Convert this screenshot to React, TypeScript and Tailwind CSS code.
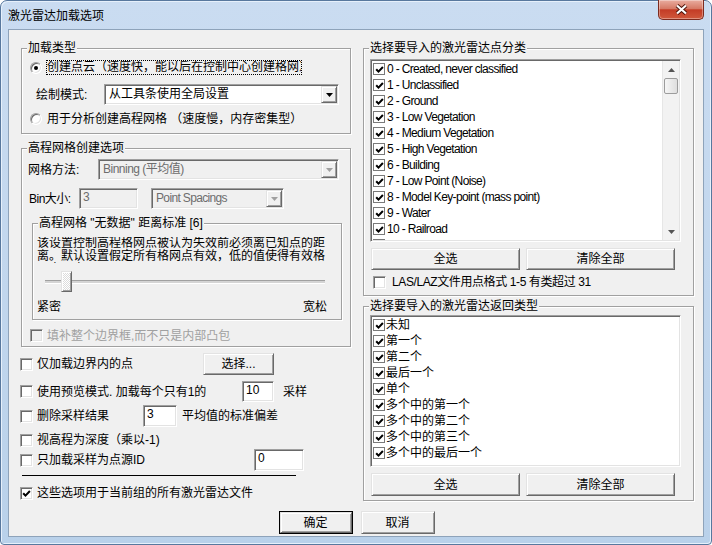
import React from "react";

const sunken =
  "border border-t-[#a0a0a0] border-l-[#a0a0a0] border-b-white border-r-white shadow-[inset_1px_1px_0_#696969,inset_-1px_-1px_0_#e3e3e3]";
const raised =
  "border border-t-[#e3e3e3] border-l-[#e3e3e3] border-b-[#696969] border-r-[#696969] shadow-[inset_1px_1px_0_#fff,inset_-1px_-1px_0_#a0a0a0] bg-[#f0f0f0]";
const etched = "border border-[#a0a0a0] shadow-[inset_1px_1px_0_#fff,1px_1px_0_#fff]";

function CheckMark() {
  return (
    <svg width="9" height="9" viewBox="0 0 9 9">
      <path d="M1.2 4.2 L3.5 6.6 L7.9 2" fill="none" stroke="#000" strokeWidth="2" />
    </svg>
  );
}

function Check({ checked = false, disabled = false }: { checked?: boolean; disabled?: boolean }) {
  return (
    <span
      className={`w-[13px] h-[13px] shrink-0 flex items-center justify-center ${sunken} ${
        disabled ? "bg-[#f0f0f0]" : "bg-white"
      }`}
    >
      {checked && <CheckMark />}
    </span>
  );
}

function ListCheck() {
  return (
    <span className="w-[12px] h-[12px] shrink-0 flex items-center justify-center border border-[#7a7a7a] bg-white">
      <CheckMark />
    </span>
  );
}

function Radio({ checked = false }: { checked?: boolean }) {
  return (
    <span className="w-[12px] h-[12px] shrink-0 rounded-full bg-white border border-t-[#a0a0a0] border-l-[#a0a0a0] border-b-white border-r-white shadow-[inset_1px_1px_0_#696969,inset_-1px_-1px_0_#e3e3e3] flex items-center justify-center">
      {checked && <span className="w-[4px] h-[4px] rounded-full bg-black" />}
    </span>
  );
}

function Combo({
  text,
  className = "",
  textClass = "",
  disabled = false,
}: {
  text: string;
  className?: string;
  textClass?: string;
  disabled?: boolean;
}) {
  return (
    <div
      className={`h-[21px] p-[1px] flex ${sunken} ${disabled ? "bg-[#f0f0f0] text-[#6d6d6d]" : "bg-white"} ${className}`}
    >
      <div className={`flex-1 pl-[3px] leading-[17px] whitespace-nowrap overflow-hidden ${textClass}`}>{text}</div>
      <div className={`w-[16px] h-[17px] flex items-center justify-center ${raised}`}>
        <svg width="7" height="4" viewBox="0 0 7 4">
          <path d="M0 0H7L3.5 4Z" fill={disabled ? "#a0a0a0" : "#000"} />
        </svg>
      </div>
    </div>
  );
}

function Edit({ value, className = "", disabled = false }: { value: string; className?: string; disabled?: boolean }) {
  return (
    <div
      className={`${sunken} ${disabled ? "bg-[#f0f0f0] text-[#6d6d6d]" : "bg-white"} pl-[3px] pt-[1px] leading-[15px] ${className}`}
    >
      {value}
    </div>
  );
}

function Btn({ children, className = "" }: { children: React.ReactNode; className?: string }) {
  return <div className={`flex items-center justify-center ${raised} ${className}`}>{children}</div>;
}

function Scrollbar() {
  return (
    <div className="w-[17px] h-full flex flex-col bg-[#f2f2f2] border-l border-[#e6e6e6]">
      <div className="h-[17px] flex items-center justify-center">
        <svg width="7" height="4" viewBox="0 0 7 4">
          <path d="M3.5 0L7 4H0Z" fill="#555" />
        </svg>
      </div>
      <div className="mx-[1px] h-[16px] rounded-[2px] border border-[#9c9c9c] bg-gradient-to-r from-[#f6f6f6] to-[#dedede]" />
      <div className="flex-1" />
      <div className="h-[17px] flex items-center justify-center">
        <svg width="7" height="4" viewBox="0 0 7 4">
          <path d="M0 0H7L3.5 4Z" fill="#555" />
        </svg>
      </div>
    </div>
  );
}

const classes = [
  "0 - Created, never classified",
  "1 - Unclassified",
  "2 - Ground",
  "3 - Low Vegetation",
  "4 - Medium Vegetation",
  "5 - High Vegetation",
  "6 - Building",
  "7 - Low Point (Noise)",
  "8 - Model Key-point (mass point)",
  "9 - Water",
  "10 - Railroad",
  "11 - Road Surface",
  "12 - Overlap",
];

const returns = ["未知", "第一个", "第二个", "最后一个", "单个", "多个中的第一个", "多个中的第二个", "多个中的第三个", "多个中的最后一个"];

export default function App() {
  return (
    <div className="w-[712px] h-[545px] font-['Liberation_Sans','Noto_Sans_CJK_SC',sans-serif] text-[12px] leading-[14px] text-black">
      <div className="w-full h-full flex flex-col border border-[#58789e] rounded-t-[7px] rounded-b-[4px] bg-gradient-to-b from-[#cadcf1] to-[#b9d1ea] shadow-[inset_1px_1px_0_#e6f0fb,inset_-1px_-1px_0_#e6f0fb]">
        {/* title bar */}
        <div className="h-[28px] flex items-start justify-between pl-[7px] pr-[7px]">
          <div className="mt-[8px] leading-[14px]">激光雷达加载选项</div>
          <div className="-mt-px w-[46px] h-[20px] rounded-b-[5px] border border-t-0 border-[#7d2b1f] bg-[linear-gradient(#e9ada0,#d67a66_45%,#c43c26_52%,#d0583c)] shadow-[inset_0_0_0_1px_rgba(255,255,255,0.35)] flex items-center justify-center">
            <svg width="13" height="11" viewBox="0 0 13 11">
              <path d="M2 1.5 L11 9.5 M11 1.5 L2 9.5" stroke="#4a1209" strokeWidth="4" />
              <path d="M2 1.5 L11 9.5 M11 1.5 L2 9.5" stroke="#fff" strokeWidth="2.2" />
            </svg>
          </div>
        </div>

        {/* client */}
        <div className="mx-[7px] mb-[7px] flex-1 border border-[#8ea3ba] bg-[#f0f0f0] flex flex-col pl-[12px] pr-[9px] pt-[11px]">
          <div className="flex gap-[12px]">
            {/* left column */}
            <div className="w-[330px] flex flex-col">
              <fieldset className={`${etched} pb-[7px]`}>
                <legend className="ml-[5px] px-[1px] bg-[#f0f0f0] leading-[14px]">加载类型</legend>
                <div className="pl-[8px]">
                  <div className="mt-[5px] h-[15px] flex items-center">
                    <Radio checked />
                    <span className="ml-[4px] w-[256px] h-[15px] border border-dotted border-black overflow-hidden whitespace-nowrap leading-[13px]">
                      创建点云（速度快，能以后在控制中心创建格网）
                    </span>
                  </div>
                  <div className="mt-[9px] h-[21px] flex items-center pl-[6px]">
                    <span className="w-[68px]">绘制模式:</span>
                    <Combo className="w-[235px]" text="从工具条使用全局设置" />
                  </div>
                  <div className="mt-[6px] h-[15px] flex items-center">
                    <Radio />
                    <span className="ml-[5px] whitespace-nowrap">用于分析创建高程网格 （速度慢，内存密集型）</span>
                  </div>
                </div>
              </fieldset>

              <fieldset className={`mt-[7px] ${etched} pb-[4px]`}>
                <legend className="ml-[5px] px-[1px] bg-[#f0f0f0] leading-[14px]">高程网格创建选项</legend>
                <div className="pl-[6px]">
                  <div className="mt-[4px] h-[21px] flex items-center">
                    <span className="w-[70px]">网格方法:</span>
                    <Combo disabled className="w-[241px]" textClass="tracking-[-0.5px]" text="Binning (平均值)" />
                  </div>
                  <div className="mt-[8px] h-[21px] flex items-center">
                    <span className="w-[51px] pl-[1px] tracking-[-0.5px]">Bin大小:</span>
                    <Edit disabled className="w-[59px] h-[21px]" value="3" />
                    <Combo
                      disabled
                      className="ml-[13px] w-[133px]"
                      textClass="tracking-[-0.65px]"
                      text="Point Spacings"
                    />
                  </div>
                  <fieldset className={`mt-[7px] ml-[4px] w-[310px] ${etched} pb-[5px]`}>
                    <legend className="ml-[5px] px-[1px] bg-[#f0f0f0] leading-[14px]">高程网格 "无数据" 距离标准 [6]</legend>
                    <div className="pl-[4px]">
                      <div className="mt-[7px] w-[292px] h-[26px] leading-[13px] overflow-hidden">
                        该设置控制高程格网点被认为失效前必须离已知点的距离。默认设置假定所有格网点有效，低的值使得有效格网点更少。
                      </div>
                      <div className="mt-[8px] h-[21px] relative pl-[8px] pt-[9px]">
                        <div className="w-[280px] h-[3px] border-t border-[#a0a0a0] bg-[#d4d4d4] shadow-[0_1px_0_#fff]" />
                        <div className="absolute left-[24px] top-0 w-[11px] h-[21px] border border-t-[#e3e3e3] border-l-[#e3e3e3] border-b-[#696969] border-r-[#696969] shadow-[inset_1px_1px_0_#fff,inset_-1px_-1px_0_#a0a0a0] bg-[repeating-conic-gradient(#ffffff_0_25%,#dcdcdc_0_50%)] bg-[length:2px_2px]" />
                      </div>
                      <div className="mt-[9px] w-[290px] h-[13px] flex justify-between leading-[13px]">
                        <span>紧密</span>
                        <span>宽松</span>
                      </div>
                    </div>
                  </fieldset>
                  <div className="mt-[9px] h-[13px] flex items-center pl-[2px] text-[#a0a0a0]">
                    <Check disabled />
                    <span className="ml-[4px]">填补整个边界框,而不只是内部凸包</span>
                  </div>
                </div>
              </fieldset>

              <div className="mt-[6px] h-[22px] flex items-center">
                <div className="-ml-px w-[183px] flex items-center">
                  <Check />
                  <span className="ml-[4px]">仅加载边界内的点</span>
                </div>
                <Btn className="w-[71px] h-[22px]">选择...</Btn>
              </div>
              <div className="mt-[6px] h-[21px] flex items-center">
                <div className="-ml-px w-[222px] flex items-center">
                  <Check />
                  <span className="ml-[4px]">使用预览模式. 加载每个只有1的</span>
                </div>
                <Edit className="w-[32px] h-[21px]" value="10" />
                <span className="ml-[9px]">采样</span>
              </div>
              <div className="mt-[3px] h-[22px] flex items-center">
                <div className="-ml-px w-[123px] flex items-center">
                  <Check />
                  <span className="ml-[4px]">删除采样结果</span>
                </div>
                <Edit className="w-[34px] h-[22px]" value="3" />
                <span className="ml-[5px]">平均值的标准偏差</span>
              </div>
              <div className="mt-[6px] h-[14px] flex items-center">
                <div className="-ml-px flex items-center">
                  <Check />
                  <span className="ml-[4px]">视高程为深度（乘以-1)</span>
                </div>
              </div>
              <div className="mt-[2px] h-[22px] flex items-center">
                <div className="-ml-px w-[234px] flex items-center">
                  <Check />
                  <span className="ml-[4px]">只加载采样为点源ID</span>
                </div>
                <Edit className="w-[50px] h-[22px]" value="0" />
              </div>
              <div className="mt-[4px] ml-[1px] w-[274px] h-px bg-black" />
              <div className="mt-[10px] h-[14px] flex items-center">
                <div className="-ml-px flex items-center">
                  <Check checked />
                  <span className="ml-[4px]">这些选项用于当前组的所有激光雷达文件</span>
                </div>
              </div>
            </div>

            {/* right column */}
            <div className="w-[331px] flex flex-col">
              <fieldset className={`${etched} pb-[6px]`}>
                <legend className="ml-[5px] px-[1px] bg-[#f0f0f0] leading-[14px]">选择要导入的激光雷达点分类</legend>
                <div className="pl-[6px]">
                  <div className={`mt-[4px] w-[311px] h-[183px] p-[1px] bg-white flex ${sunken}`}>
                    <div className="flex-1 overflow-hidden">
                      {classes.map((c) => (
                        <div key={c} className="h-[16px] flex items-center pl-[1px]">
                          <ListCheck />
                          <span className="ml-[2px] whitespace-nowrap tracking-[-0.65px]">{c}</span>
                        </div>
                      ))}
                    </div>
                    <Scrollbar />
                  </div>
                  <div className="mt-[6px] ml-[1px] flex gap-[6px]">
                    <Btn className="w-[149px] h-[22px]">全选</Btn>
                    <Btn className="w-[149px] h-[22px]">清除全部</Btn>
                  </div>
                  <div className="mt-[5px] h-[14px] flex items-center ml-[3px]">
                    <Check />
                    <span className="ml-[6px] tracking-[-0.4px]">LAS/LAZ文件用点格式 1-5 有类超过 31</span>
                  </div>
                </div>
              </fieldset>

              <fieldset className={`mt-[3px] ${etched} pb-[4px]`}>
                <legend className="ml-[5px] px-[1px] bg-[#f0f0f0] leading-[14px]">选择要导入的激光雷达返回类型</legend>
                <div className="pl-[6px]">
                  <div className={`mt-[2px] w-[311px] h-[152px] p-[1px] bg-white ${sunken}`}>
                    {returns.map((c) => (
                      <div key={c} className="h-[16px] flex items-center pl-[1px]">
                        <ListCheck />
                        <span className="ml-[1px] whitespace-nowrap">{c}</span>
                      </div>
                    ))}
                  </div>
                  <div className="mt-[6px] ml-[1px] flex gap-[6px]">
                    <Btn className="w-[149px] h-[23px]">全选</Btn>
                    <Btn className="w-[149px] h-[23px]">清除全部</Btn>
                  </div>
                </div>
              </fieldset>
            </div>
          </div>

          {/* bottom buttons */}
          <div className="mt-[10px] flex justify-center gap-[8px] pr-[2px]">
            <div className="w-[74px] h-[23px] border border-black">
              <Btn className="w-full h-full">确定</Btn>
            </div>
            <Btn className="w-[74px] h-[23px]">取消</Btn>
          </div>
        </div>
      </div>
    </div>
  );
}
